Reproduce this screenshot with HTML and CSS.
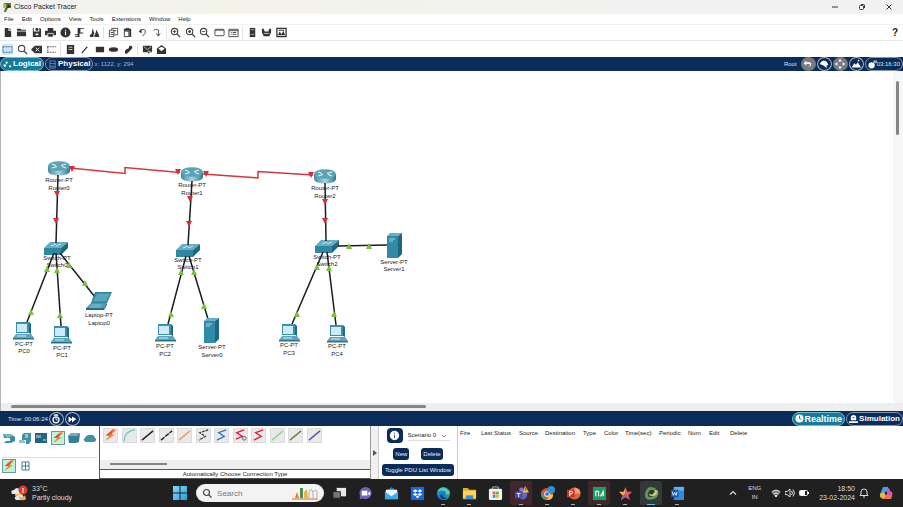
FILE: index.html
```html
<!DOCTYPE html>
<html lang="en">
<head>
<meta charset="utf-8">
<title>Cisco Packet Tracer</title>
<link rel="stylesheet" href="styles.css">
</head>
<body>
<svg class="defs" aria-hidden="true">
  <defs>
    <linearGradient id="steel" x1="0" x2="1"><stop offset="0" stop-color="#3f8ba3"/><stop offset=".5" stop-color="#a9d3de"/><stop offset="1" stop-color="#2f7890"/></linearGradient>
    <linearGradient id="edge" x1="0" y1="0" x2="1" y2="1"><stop offset="0" stop-color="#2fa9e8"/><stop offset=".55" stop-color="#1773c8"/><stop offset="1" stop-color="#3fc88a"/></linearGradient>
    <linearGradient id="win" x1="0" y1="0" x2="1" y2="1"><stop offset="0" stop-color="#7fdcf8"/><stop offset="1" stop-color="#2a9fe0"/></linearGradient>
    <symbol id="router" viewBox="0 0 22 15"><path d="M0 5v5c0 6 22 6 22 0V5z" fill="url(#steel)"/><ellipse cx="11" cy="5" rx="11" ry="4.8" fill="#5aa3b8"/><path d="M4 3l4 1.500M18 7l-4-1.500M4 7l5-1.500M18 3l-5 1.500" stroke="#e6f4f7" stroke-width="1.200"/></symbol>
    <symbol id="switch" viewBox="0 0 24 13"><path d="M0 6h17v7H0z" fill="#2f87a3"/><path d="M0 6L6 0h18l-7 6z" fill="#66adc1"/><path d="M17 6l7-6v6l-7 7z" fill="#1f6882"/><path d="M7 4l5-2M12 4l5-2" stroke="#d2eaf0"/></symbol>
    <symbol id="pc" viewBox="0 0 21 19"><path d="M3 1h13v11H3z" fill="#3c90aa"/><path d="M16 1l2 2v10l-2-1z" fill="#226a82"/><path d="M4 3h10v8H4z" fill="#cdeaf5"/><path d="M3 13h15l3 4H0z" fill="#5ba6bb"/><path d="M0 17h21v1.500H0z" fill="#28748d"/><path d="M4 15h9" stroke="#d5ecf1"/></symbol>
    <symbol id="laptop" viewBox="0 0 26 18"><path d="M9 0h17l-5 11H5z" fill="#2e849f"/><path d="M11 1.500h13l-4 8H7z" fill="#5aa6bb"/><path d="M5 11h16l-3 5H0z" fill="#4c9bb2"/><path d="M0 16h18v2H0zM18 16l3-5v2l-3 5z" fill="#226c86"/><path d="M5 13h11M4 15h11" stroke="#a6d0db" stroke-width=".7"/></symbol>
    <symbol id="server" viewBox="0 0 15 25"><path d="M0 3h11v22H0z" fill="#2f8ba7"/><path d="M0 3l3-3h12l-4 3z" fill="#68b0c4"/><path d="M11 3l4-3v21l-4 4z" fill="#1e6780"/><path d="M2 6h6M2 8h4" stroke="#a6d6e3"/></symbol>
    <symbol id="down" viewBox="0 0 6 6"><path d="M0 0h6L3 6z" fill="#d42f38"/></symbol>
    <symbol id="up" viewBox="0 0 6 6"><path d="M3 0l3 6H0z" fill="#74c23c"/></symbol>
    <symbol id="bolt" viewBox="0 0 14 14"><path d="M10 0L2 7l4 0-5 6 11-7H8l5-5z" fill="#f58b22"/><path d="M10 0L2 7l4 0 2-2z" fill="#e3503a"/></symbol>
    <symbol id="zoomer" viewBox="0 0 12 12"><circle cx="5" cy="5" r="3.500" fill="none" stroke="#444" stroke-width="1.200"/><path d="M7.500 7.500L11 11" stroke="#444" stroke-width="1.500"/></symbol>
  </defs>
</svg>

<header class="titlebar">
  <svg class="logo" viewBox="0 0 9 11"><path d="M1 1h7v5H5L3 10H1l1-4z" fill="#5c7a32"/><path d="M0 2h3v4H0z" fill="#b2c248"/><path d="M5 2l3 3-4 1z" fill="#223522"/></svg>
  <span class="apptitle">Cisco Packet Tracer</span>
  <div class="winbtns">
    <button aria-label="Minimize"><svg viewBox="0 0 8 8"><path d="M1 4h6" stroke="#333"/></svg></button>
    <button aria-label="Restore"><svg viewBox="0 0 8 8"><rect x="1.500" y="2.500" width="4" height="4" rx="1" fill="none" stroke="#333"/><path d="M3 1.500h2.500q1 0 1 1V5" fill="none" stroke="#333"/></svg></button>
    <button aria-label="Close"><svg viewBox="0 0 8 8"><path d="M1.500 1.500l5 5M6.500 1.500l-5 5" stroke="#333"/></svg></button>
  </div>
</header>

<nav class="menu">
  <a href="#">File</a><a href="#">Edit</a><a href="#">Options</a><a href="#">View</a><a href="#">Tools</a><a href="#">Extensions</a><a href="#">Window</a><a href="#">Help</a>
</nav>

<div class="toolbar">
  <div class="tools main">
    <button aria-label="New"><svg viewBox="0 0 12 12"><path d="M3 1h4v3h3v7H3z"/><path d="M8 1l2 2H8z"/></svg></button>
    <button aria-label="Open"><svg viewBox="0 0 12 12"><path d="M1 2h4l1 1h5v1H1zM1 5h10v5H1z"/></svg></button>
    <button aria-label="Save"><svg viewBox="0 0 12 12"><path fill-rule="evenodd" d="M2 1h1v4h6V1l2 1v9H2zM5 1h3v3H5zM5 7v2h3V7z"/></svg></button>
    <button aria-label="Print"><svg viewBox="0 0 12 12"><path d="M3 1h6v3H3zM0 4h12v5H0z"/><path d="M3 7h6v4H3z" stroke="#fff" stroke-width=".8"/></svg></button>
    <button aria-label="Activity"><svg viewBox="0 0 12 12"><circle cx="6" cy="6" r="5.500"/><path d="M6 3v1M6 5v4" stroke="#fff" stroke-width="1.200"/></svg></button>
    <button aria-label="Wizard"><svg viewBox="0 0 12 12"><path d="M4 1h7v1H7v4h3v1H6v4H1v-1h3zM1 8h3v1H1z"/></svg></button>
    <button aria-label="User"><svg viewBox="0 0 12 12"><path d="M4 1l2 7H5v3H1V9l2-2zM8 3l3 6v2H6V9l1-2z"/></svg></button>
    <i class="sep"></i>
    <button aria-label="Copy"><svg viewBox="0 0 12 12"><path d="M1.500 3.500h5v7h-5zM4 3V1.500h6.500v7H7M3 6h3M3 8h3M6 4h3" fill="none" stroke="#444"/></svg></button>
    <button aria-label="Paste"><svg viewBox="0 0 12 12"><path d="M2 2h8v9H8V4H2z"/><path d="M2.500 4.500h5v6h-5zM4 1.500h4" fill="none" stroke="#333"/></svg></button>
    <button aria-label="Undo"><svg viewBox="0 0 12 12"><path d="M3 4q5-3 6 0T6 10" fill="none" stroke="#444"/><path d="M5 2v5L2 5z"/></svg></button>
    <button aria-label="Redo"><svg viewBox="0 0 12 12"><path d="M9 4Q4 1 3 4" fill="none" stroke="#444"/><path d="M8 4v5M6 7l2 3 2-3" fill="none" stroke="#444"/></svg></button>
    <i class="sep"></i>
    <button aria-label="Zoom in"><svg viewBox="0 0 12 12"><use href="#zoomer"/><path d="M3 5h4M5 3v4" stroke="#444"/></svg></button>
    <button aria-label="Zoom reset"><svg viewBox="0 0 12 12"><use href="#zoomer"/><circle cx="5" cy="5" r="1.500"/></svg></button>
    <button aria-label="Zoom out"><svg viewBox="0 0 12 12"><use href="#zoomer"/><path d="M3 5h4" stroke="#444"/></svg></button>
    <button aria-label="Window"><svg viewBox="0 0 12 12"><rect x="1" y="2.500" width="10" height="7" rx="1" fill="none" stroke="#444"/><path d="M1 3.500h10" stroke="#444"/></svg></button>
    <button aria-label="Dialog"><svg viewBox="0 0 12 12"><path d="M1 2.500h10v8H1zM1 4h10M3 6h1M5 6h4M3 8h1M5 8h4" fill="none" stroke="#444"/></svg></button>
    <i class="sep"></i>
    <button aria-label="Device"><svg viewBox="0 0 12 12"><path d="M3 1h6v10H3z"/><path d="M4 3h4M4 8h4" stroke="#aaa"/></svg></button>
    <button aria-label="Cluster"><svg viewBox="0 0 12 12"><path d="M1 2h2l1 3h4l1-3h2v4l-2 4H3L1 6z"/><path d="M3 7h6" stroke="#ccc"/></svg></button>
    <button aria-label="Image"><svg viewBox="0 0 12 12"><path d="M1 1.500h10v9H1z" fill="none" stroke="#333" stroke-width="1.400"/><path d="M2 9l2-4 2 3 2-4 2 5zM3 3h6v1H3z"/></svg></button>
  </div>
  <button class="help" aria-label="Help">?</button>
</div>

<div class="toolbar second">
  <div class="tools draw">
    <button class="picked" aria-label="Select"><svg viewBox="0 0 12 12"><path d="M1 3h10v6H1z" fill="none" stroke="#27608f" stroke-dasharray="2 1"/></svg></button>
    <button aria-label="Inspect"><svg viewBox="0 0 12 12"><use href="#zoomer"/></svg></button>
    <button aria-label="Delete"><svg viewBox="0 0 12 12"><path d="M0 6l4-4h8v8H4z"/><path d="M5 4l4 4M9 4L5 8" stroke="#fff"/></svg></button>
    <button aria-label="Resize"><svg viewBox="0 0 12 12"><path d="M1 3h10M1 9h10M2 3v6" fill="none" stroke="#444" stroke-dasharray="2 1"/></svg></button>
    <i class="sep"></i>
    <button aria-label="Note"><svg viewBox="0 0 12 12"><path d="M2 1h8v10H2z"/><path d="M4 3.500h4M4 6h4" stroke="#ddd"/></svg></button>
    <button aria-label="Line"><svg viewBox="0 0 12 12"><path d="M3 10l6-7" stroke="#333" stroke-width="1.300"/></svg></button>
    <button aria-label="Rectangle"><svg viewBox="0 0 12 12"><path d="M2 3h9v6H2z"/></svg></button>
    <button aria-label="Ellipse"><svg viewBox="0 0 12 12"><ellipse cx="6" cy="6" rx="5" ry="2.500"/></svg></button>
    <button aria-label="Freeform"><svg viewBox="0 0 12 12"><path d="M7 2q4-1 3 3L6 9q-4 4-4-1 1-3 4-3z"/></svg></button>
    <i class="sep"></i>
    <button aria-label="Simple PDU"><svg viewBox="0 0 12 12"><path d="M1 2h10v7H8v2L6 9H1z"/><path d="M2 3l4 3 4-3M6 8h4" fill="none" stroke="#ddd" stroke-width=".8"/></svg></button>
    <button aria-label="Complex PDU"><svg viewBox="0 0 12 12"><path d="M1 5l5-4 5 4v6H1z"/><path d="M2.500 5L6 3l3.500 2L6 8z" fill="#fff"/></svg></button>
  </div>
</div>

<div class="bluebar">
  <button class="mode on"><svg viewBox="0 0 10 10"><circle cx="4" cy="3" r="1.200"/><circle cx="2" cy="6" r="1.400"/><circle cx="8" cy="7" r="1.200"/></svg>Logical</button>
  <button class="mode"><svg viewBox="0 0 10 10"><path d="M2 1h6v8H2zM2 4h6M2 7h6" fill="none" stroke="#7388aa"/></svg>Physical</button>
  <span class="coords">x: 1122, y: 294</span>
  <div class="right">
    <span class="root">Root</span>
    <button class="round gray" aria-label="Back"><svg viewBox="0 0 14 14"><path d="M5 3L2 6l3 3V7h4v4q4-6-1-6H5z"/></svg></button>
    <button class="round" aria-label="New cluster"><svg viewBox="0 0 14 14"><path d="M2 7l2-3 3-1 3 1 2 4-2 1v3L7 9z"/></svg></button>
    <button class="round gray" aria-label="Move"><svg viewBox="0 0 14 14"><path d="M7 1l2 3H5zM7 13l2-3H5zM1 7l3-2v4zM13 7l-3-2v4z"/></svg></button>
    <button class="round" aria-label="Background"><svg viewBox="0 0 14 14"><path d="M2 11l3-5 2 2 2-3 4 6z"/><circle cx="10" cy="3" r="1"/></svg></button>
    <button class="clock"><svg viewBox="0 0 10 10"><circle cx="4" cy="6.500" r="3.500"/><path d="M6 1h4v3H6z" opacity=".6"/></svg>03:16:30</button>
  </div>
</div>

<main class="workspace">
  <div class="view">
    <svg class="topology" viewBox="0 71 890 332">
      <use href="#router" x="48" y="161" width="22" height="15"/>
      <use href="#router" x="181" y="167" width="22" height="15"/>
      <use href="#router" x="314" y="169" width="22" height="15"/>
      <use href="#switch" x="44" y="242" width="24" height="13"/>
      <use href="#switch" x="176" y="244" width="24" height="13"/>
      <use href="#switch" x="315" y="240" width="24" height="13"/>
      <g class="labels">
        <text x="59" y="182">Router-PT</text><text x="59" y="190">Router0</text>
        <text x="192" y="187">Router-PT</text><text x="192" y="195">Router1</text>
        <text x="325" y="190">Router-PT</text><text x="325" y="198">Router2</text>
        <text x="57" y="260">Switch-PT</text><text x="57" y="267">Switch0</text>
        <text x="188" y="262">Switch-PT</text><text x="188" y="269">Switch1</text>
        <text x="327" y="259">Switch-PT</text><text x="327" y="266">Switch2</text>
        <text x="99" y="317">Laptop-PT</text><text x="99" y="325">Laptop0</text>
        <text x="24" y="346">PC-PT</text><text x="24" y="353">PC0</text>
        <text x="62" y="350">PC-PT</text><text x="62" y="357">PC1</text>
        <text x="165" y="348">PC-PT</text><text x="165" y="356">PC2</text>
        <text x="212" y="349">Server-PT</text><text x="212" y="357">Server0</text>
        <text x="289" y="347">PC-PT</text><text x="289" y="355">PC3</text>
        <text x="337" y="348">PC-PT</text><text x="337" y="356">PC4</text>
        <text x="394" y="264">Server-PT</text><text x="394" y="271">Server1</text>
      </g>
      <g class="serial">
        <path d="M70 168l55 5.500v-6l55 5"/>
        <path d="M203 174l55 4v-6.500l55 3.500"/>
      </g>
      <g class="copper">
        <path d="M58 175L56 243M192 181L188 245M325 183L326 241"/>
        <path d="M54 253L27 322M56 253L61 326M60 253L95 297"/>
        <path d="M186 256L168 324M189 256L208 319"/>
        <path d="M323 252L292 324M327 252L336 325M338 246L387 245"/>
      </g>
      <use href="#laptop" x="86" y="292" width="26" height="18"/>
      <use href="#pc" x="13" y="321" width="21" height="19"/>
      <use href="#pc" x="51" y="325" width="21" height="19"/>
      <use href="#pc" x="155" y="323" width="21" height="19"/>
      <use href="#pc" x="279" y="323" width="21" height="19"/>
      <use href="#pc" x="327" y="324" width="21" height="19"/>
      <use href="#server" x="204" y="318" width="15" height="25"/>
      <use href="#server" x="387" y="233" width="15" height="25"/>
      <g>
        <use href="#down" x="69" y="166" width="6" height="6"/><use href="#down" x="175" y="169" width="6" height="6"/>
        <use href="#down" x="203" y="171" width="6" height="6"/><use href="#down" x="308" y="172" width="6" height="6"/>
        <use href="#down" x="54" y="191" width="6" height="6"/><use href="#down" x="53" y="218" width="6" height="6"/>
        <use href="#down" x="187" y="196" width="6" height="6"/><use href="#down" x="186" y="221" width="6" height="6"/>
        <use href="#down" x="322" y="199" width="6" height="6"/><use href="#down" x="322" y="218" width="6" height="6"/>
      </g>
      <g>
        <use href="#up" x="44" y="266" width="6" height="6"/><use href="#up" x="54" y="267" width="6" height="6"/><use href="#up" x="66" y="262" width="6" height="6"/>
        <use href="#up" x="82" y="280" width="6" height="6"/><use href="#up" x="28" y="309" width="6" height="6"/><use href="#up" x="57" y="312" width="6" height="6"/>
        <use href="#up" x="178" y="269" width="6" height="6"/><use href="#up" x="191" y="269" width="6" height="6"/><use href="#up" x="168" y="311" width="6" height="6"/><use href="#up" x="201" y="303" width="6" height="6"/>
        <use href="#up" x="314" y="264" width="6" height="6"/><use href="#up" x="326" y="265" width="6" height="6"/><use href="#up" x="294" y="311" width="6" height="6"/><use href="#up" x="331" y="311" width="6" height="6"/>
        <use href="#up" x="346" y="243" width="6" height="6"/><use href="#up" x="366" y="243" width="6" height="6"/>
      </g>
    </svg>
    <div class="vscroll"><i></i></div>
  </div>
  <div class="hscroll"><i></i></div>
</main>

<div class="bluebar lower">
  <span class="time">Time: 00:06:24</span>
  <button class="round" aria-label="Power cycle"><svg viewBox="0 0 14 14"><circle cx="7" cy="8" r="3.500" fill="none" stroke="#fff" stroke-width="1.500"/><path d="M5 2h4v1H5zM7 5v3h2" fill="none" stroke="#fff"/></svg></button>
  <button class="round" aria-label="Fast forward"><svg viewBox="0 0 14 14"><path d="M3 4l4 3V4l5 3-5 4V8l-4 3z"/></svg></button>
  <div class="right">
    <button class="mode on large"><svg viewBox="0 0 10 10"><circle cx="5" cy="5" r="4.500"/><path d="M5 2v3l2 1" stroke="#167a99" fill="none"/></svg>Realtime</button>
    <button class="mode"><svg viewBox="0 0 10 10"><path d="M2 7V4q0-3 3-3t3 3v3zM0 8h10v2H0z"/><path d="M4 4h2" stroke="#0b2c58"/></svg>Simulation</button>
  </div>
</div>

<section class="dock">
  <div class="devices">
    <div class="cats">
      <button aria-label="Network devices"><svg viewBox="0 0 14 14"><path d="M1 3h8l4 3v4L9 12H2l2-2h4V7H2z" fill="#3c8ea6"/><path d="M1 3h8l2 2-6 2z" fill="#78b5c5"/></svg></button>
      <button aria-label="End devices"><svg viewBox="0 0 14 14"><path d="M6 2h7v8l-2 3H8V9H4V4z" fill="#438fa7"/><path d="M7 3h3v4H7zM1 9h5l2 3H1z" fill="#8fc3d1"/></svg></button>
      <button aria-label="Components"><svg viewBox="0 0 14 14"><path d="M1 2h12v10H1z" fill="#27637d"/><path d="M2 4h5v3H2zM9 8h3v2H9z" fill="#6ba6ba"/></svg></button>
      <button class="chosen" aria-label="Connections"><svg viewBox="0 0 14 14"><use href="#bolt"/></svg></button>
      <button aria-label="Miscellaneous"><svg viewBox="0 0 14 14"><path d="M1 5l3-3h9l-1 9-3 1H2z" fill="#377f96"/><path d="M1 5l3-3h9l-3 3z" fill="#76aebe"/></svg></button>
      <button aria-label="Multiuser"><svg viewBox="0 0 14 14"><path d="M3 11q-4-2-1-4 1-3 4-3 5-1 6 3 3 2-1 4z" fill="#458fa6"/></svg></button>
    </div>
    <div class="cats sub">
      <button class="chosen" aria-label="Connections"><svg viewBox="0 0 14 14"><use href="#bolt"/></svg></button>
      <button aria-label="Structured cabling"><svg viewBox="0 0 14 14"><path d="M4 3h7v8H4zM7.500 3v8M4 7h7" fill="none" stroke="#3d8097"/></svg></button>
    </div>
  </div>
  <div class="cables">
    <div class="types">
      <button aria-label="Automatic"><svg viewBox="0 0 14 14"><use href="#bolt"/></svg></button>
      <button aria-label="Console"><svg viewBox="0 0 14 14"><path d="M1 13Q2 2 13 1" fill="none" stroke="#6cc5cf" stroke-width="1.500"/></svg></button>
      <button aria-label="Straight-through"><svg viewBox="0 0 14 14"><path d="M1 12L13 2" stroke="#222" stroke-width="1.500"/></svg></button>
      <button aria-label="Cross-over"><svg viewBox="0 0 14 14"><path d="M1 12L13 2" stroke="#222" stroke-width="1.500" stroke-dasharray="5 1"/></svg></button>
      <button aria-label="Fiber"><svg viewBox="0 0 14 14"><path d="M1 12L13 2" stroke="#e3a451" stroke-width="1.500"/></svg></button>
      <button aria-label="Phone"><svg viewBox="0 0 14 14"><path d="M12 1L3 4l6 4-7 4" fill="none" stroke="#333" stroke-width="1.300" stroke-dasharray="3 1"/></svg></button>
      <button aria-label="Coaxial"><svg viewBox="0 0 14 14"><path d="M12 1L4 4l6 4-8 4" fill="none" stroke="#3279bd" stroke-width="1.500"/></svg></button>
      <button aria-label="Serial DCE"><svg viewBox="0 0 14 14"><path d="M11 1L3 4l6 4-7 3" fill="none" stroke="#d6232f" stroke-width="1.500"/><circle cx="11" cy="10" r="2" fill="#ddd" stroke="#666"/></svg></button>
      <button aria-label="Serial DTE"><svg viewBox="0 0 14 14"><path d="M12 1L4 4l6 4-8 4" fill="none" stroke="#d6232f" stroke-width="1.500"/></svg></button>
      <button aria-label="Octal"><svg viewBox="0 0 14 14"><path d="M1 12L13 2" stroke="#87d890" stroke-width="1.500"/></svg></button>
      <button aria-label="IoT cable"><svg viewBox="0 0 14 14"><path d="M1 12L13 2" stroke="#7d7847" stroke-width="1.500"/></svg></button>
      <button aria-label="USB"><svg viewBox="0 0 14 14"><path d="M1 12L13 2" stroke="#5f55ae" stroke-width="1.500"/></svg></button>
    </div>
    <div class="cscroll"><i></i></div>
    <div class="caption">Automatically Choose Connection Type</div>
  </div>
  <button class="grip" aria-label="Collapse"><svg viewBox="0 0 4 6"><path d="M0 0l4 3-4 3z" fill="#555"/></svg></button>
  <div class="scenario">
    <div class="pick">
      <button class="info" aria-label="Scenario description"><svg viewBox="0 0 14 14"><circle cx="7" cy="7" r="5" fill="#fff"/><path d="M7 4v1M7 6v4" stroke="#2a4f7d"/></svg></button>
      <select aria-label="Scenario"><option>Scenario 0</option></select>
      <svg class="chev" viewBox="0 0 6 4"><path d="M1 1l2 2 2-2" fill="none" stroke="#666" stroke-width=".8"/></svg>
    </div>
    <div class="pair"><button class="navy">New</button><button class="navy">Delete</button></div>
    <button class="navy toggle">Toggle PDU List Window</button>
  </div>
  <div class="pdus">
    <table>
      <colgroup><col class="c-s"><col class="c-l"><col class="c-m"><col class="c-l"><col class="c-s"><col class="c-s"><col class="c-t"><col class="c-p"><col class="c-s"><col class="c-s"><col></colgroup>
      <thead><tr><th>Fire</th><th>Last Status</th><th>Source</th><th>Destination</th><th>Type</th><th>Color</th><th>Time(sec)</th><th>Periodic</th><th>Num</th><th>Edit</th><th>Delete</th></tr></thead>
    </table>
  </div>
</section>

<footer class="taskbar">
  <button class="weather">
    <svg viewBox="0 0 18 18"><circle cx="9" cy="10" r="4" fill="#f4b63f"/><path d="M2 10q-2-4 2-4 3-4 6 0v4zM6 16q-3-3 1-4 4-3 7 1 2 3-1 3z" fill="#dbe8f5"/><path d="M9 12q4 3 6-1l1 4q-2 2-6 1z" fill="#f7a94f"/><circle cx="13" cy="6" r="4.500" fill="#e0392f"/><path d="M12 5l1-1v5" fill="none" stroke="#fff"/></svg>
    <span>33°C<br>Partly cloudy</span>
  </button>
  <button class="start" aria-label="Start"><svg viewBox="0 0 14 14"><path d="M0 0h6.500v6.500H0zM7.500 0H14v6.500H7.500zM0 7.500h6.500V14H0zM7.500 7.500H14V14H7.500z" fill="url(#win)"/></svg></button>
  <label class="search">
    <svg viewBox="0 0 10 10"><circle cx="4.500" cy="4.500" r="3" fill="none" stroke="#444" stroke-width="1.200"/><path d="M7 7l2.500 2.500" stroke="#444" stroke-width="1.200"/></svg>
    <input type="text" placeholder="Search" aria-label="Search">
    <svg class="deco" viewBox="0 0 28 14"><path d="M0 12h26v2H0z" fill="#e2b08c"/><path d="M3 12l2-6 2 6z" fill="#e8793c"/><path d="M8 2h3v10H8z" fill="#4f8b52"/><path d="M12 6l3-3 1 9h-4z" fill="#e9b73d"/><path d="M17 12V6q2-5 4 0v6M21 6q3-4 4 0v6" fill="none" stroke="#a8b694"/></svg>
  </label>
  <div class="apps">
    <button aria-label="Task view"><svg viewBox="0 0 16 16"><path d="M5 2h10v9H5z" fill="#e8e8e8"/><path d="M1 6h8v7H1z" fill="#777" stroke="#222"/></svg></button>
    <button aria-label="Chat"><svg viewBox="0 0 16 16"><circle cx="8" cy="7.500" r="6.500" fill="#7063ba"/><path d="M2 10l0 4 4-1z" fill="#7063ba"/><path d="M4 5h6v5H4zM11 7l2-1v4l-2-1z" fill="#fff"/></svg></button>
    <button aria-label="Mail"><svg viewBox="0 0 16 16"><path d="M1 6l7-5 7 5v8H1z" fill="#1c78c8"/><path d="M2 4h12v5l-6 3-6-3z" fill="#eef6fb"/><path d="M1 6l7 5 7-5v8H1z" fill="#39acea"/></svg></button>
    <button aria-label="Dropbox"><svg viewBox="0 0 16 16"><path d="M1 1h14v14H1z" fill="#1669e5"/><path d="M5.500 3.500L8 5.200 5.500 7 3 5.200zM10.500 3.500L13 5.200 10.500 7 8 5.200zM5.500 7.200L8 9l-2.500 1.700L3 9zM10.500 7.200L13 9l-2.500 1.700L8 9zM8 10l2 1.500L8 13l-2-1.500z" fill="#fff"/></svg></button>
    <button class="run" aria-label="Edge"><svg viewBox="0 0 16 16"><circle cx="8" cy="8" r="7" fill="url(#edge)"/><path d="M2 5q5-7 12 0 2 5-4 4 1-4-3-4Q4 4 2 6z" fill="#55d0a6"/><path d="M6 8q0 5 7 4-6 5-9-1z" fill="#123e83"/></svg></button>
    <button class="run" aria-label="Explorer"><svg viewBox="0 0 16 16"><path d="M1 2h5l2 2h7v10H1z" fill="#e9a92b"/><path d="M1 5h14v8H1z" fill="#fbd35d"/><path d="M4 10h8v4H4z" fill="#3c8ed1"/></svg></button>
    <button aria-label="Store"><svg viewBox="0 0 16 16"><path d="M5 4V1h6v3" fill="none" stroke="#bbb"/><rect x="1" y="3" width="14" height="12" rx="1.500" fill="#f1f1f1"/><path d="M5 6h3v3H5z" fill="#e9603c"/><path d="M8.500 6h3v3h-3z" fill="#6caf3a"/><path d="M5 9.500h3v3H5z" fill="#3b92d8"/><path d="M8.500 9.500h3v3h-3z" fill="#e4b338"/></svg></button>
    <button class="run warm" aria-label="Teams"><svg viewBox="0 0 16 16"><circle cx="8" cy="4" r="2.500" fill="#737bd9"/><path d="M4 6h10v5q-4 6-9 1z" fill="#6268c8"/><path d="M1 6h8v7H1z" fill="#464ab2"/><path d="M3 8h4M5 8v4" stroke="#fff"/><path d="M12 0l4 7H9z" fill="#f5b548"/><path d="M12.500 2v3" stroke="#543"/></svg></button>
    <button class="run" aria-label="Chrome"><svg viewBox="0 0 16 16"><circle cx="7.500" cy="8.500" r="6.500" fill="#e84a3b"/><path d="M1.500 6l4 6 2 3Q1 15 1 8z" fill="#3aa757"/><path d="M7 15l4-6h3q0 6-7 6z" fill="#f8c83a"/><circle cx="7.500" cy="8.500" r="3" fill="#fff"/><circle cx="7.500" cy="8.500" r="2.200" fill="#397ce0"/><circle cx="12" cy="4" r="4" fill="#2793d1"/></svg></button>
    <button class="run" aria-label="PowerPoint"><svg viewBox="0 0 16 16"><circle cx="9" cy="8" r="6.500" fill="#e0623f"/><path d="M9 1.500A6.500 6.500 0 0 1 15.500 8H9z" fill="#f59a78"/><path d="M1 4h8v8H1z" fill="#bd3a20"/><path d="M4 11V5.500h2q2 1.500 0 3H4" fill="none" stroke="#fff"/></svg></button>
    <button class="run warm" aria-label="Notes"><svg viewBox="0 0 16 16"><path d="M1 1h14v14H1z" fill="#18a061"/><path d="M4 11V6q2-1 3 0v5M9 11l3-5v5" fill="none" stroke="#fff" stroke-width="1.300"/></svg></button>
    <button class="run" aria-label="Favourites"><svg viewBox="0 0 16 16"><path d="M8 1l2 5h5l-4 4 2 5-5-3z" fill="#e65b69"/><path d="M8 1L6 6H1l4 4-2 5 5-3z" fill="#f5ae42"/><path d="M5 10l-2 5 5-3V8z" fill="#8b57b5"/></svg></button>
    <button class="run active" aria-label="Packet Tracer"><svg viewBox="0 0 16 16"><path d="M12 4Q5 0 3 7t5 6q6-1 6-6" fill="none" stroke="#639757" stroke-width="3"/><path d="M5 8q5 3 7-4l3 1q-2 8-9 5z" fill="#bed07c"/><circle cx="8" cy="7" r="2" fill="#243c2e"/></svg></button>
    <button class="run" aria-label="Word"><svg viewBox="0 0 16 16"><path d="M4 1h11v14H4z" fill="#318bdb"/><path d="M4 1h11v4H4z" fill="#5ab2f0"/><path d="M1 4h8v8H1z" fill="#1756ad"/><path d="M2.500 6l1 4L5 7l1.500 3 1-4" fill="none" stroke="#fff" stroke-width=".9"/></svg></button>
  </div>
  <div class="tray">
    <button aria-label="Hidden icons"><svg viewBox="0 0 10 10"><path d="M2 6.500l3-3 3 3" fill="none" stroke="#ddd" stroke-width="1.200"/></svg></button>
    <span class="lang">ENG<br>IN</span>
    <span class="status">
    <svg viewBox="0 0 10 10"><path d="M0 4q5-5 10 0L5 9.500z" fill="#777"/><path d="M1 4q4-3.500 8 0M2.500 6q2.500-2 5 0" fill="none" stroke="#ddd"/><circle cx="5" cy="8" r="1" fill="#fff"/></svg>
    <svg viewBox="0 0 10 10"><path d="M0 3.500h2L5 1v8L2 6.500H0zM6.500 3q2 2 0 4M8 1.500q3 3.500 0 7" fill="none" stroke="#ddd"/></svg>
    <svg viewBox="0 0 10 10"><rect x=".5" y="2.500" width="8" height="5" rx="1" fill="none" stroke="#eee"/><path d="M1 3h5v4H1zM9 4h1v2H9z" fill="#fff"/></svg>
    </span>
    <span class="date">18:50<br>23-02-2024</span>
    <button aria-label="Notifications"><svg viewBox="0 0 10 10"><path d="M1 7.500h8L8 6V4Q8 1 5 1T2 4v2zM4 9h2" fill="none" stroke="#ddd"/></svg></button>
    <button class="copilot" aria-label="Copilot"><svg viewBox="0 0 14 14"><path d="M4 1h5l1 4-4 1-2 6Q0 12 1 8z" fill="#36a7de"/><path d="M8 2q3 0 3 3l2 1q1 2 0 4l-1 3H6l2-6z" fill="#d557b3"/><path d="M1 8l4-2 2 4-2 3q-3 0-4-3z" fill="#f2b737"/><path d="M7 9h6l-1 4H5z" fill="#ef7252"/></svg></button>
  </div>
</footer>
</body>
</html>
```
FILE: styles.css
```css
* { box-sizing: border-box; }
body {
  margin: 0;
  height: 100vh;
  display: flex;
  flex-direction: column;
  overflow: hidden;
  background: #fff;
  color: #222;
  font-family: "Liberation Sans", Arial, sans-serif;
  font-size: 6px;
  line-height: 8px;
}
button, input, select {
  font: inherit;
  color: inherit;
  border: 0;
  background: none;
  padding: 0;
  margin: 0;
}
button { display: flex; align-items: center; justify-content: center; flex: none; }
svg { display: block; flex: none; }
a { color: inherit; text-decoration: none; }
.defs { position: absolute; width: 0; height: 0; }

.titlebar {
  display: flex;
  align-items: center;
  height: 14px;
  flex: none;
  padding: 0 10px 0 3px;
  gap: 2px;
  background: linear-gradient(90deg, #f1f2f0, #f3f3ea 25%, #f1f1f1 70%);
}
.logo { width: 9px; height: 11px; }
.apptitle { font-size: 7px; }
.winbtns { display: flex; margin-left: auto; gap: 19px; }
.winbtns svg { width: 8px; height: 8px; }

.menu { display: flex; align-items: center; gap: 8px; height: 10px; padding: 0 4px; flex: none; }

.toolbar {
  display: flex;
  align-items: center;
  justify-content: space-between;
  height: 17px;
  flex: none;
  padding: 0 5px 0 2px;
  border-top: 1px solid #f0f0f0;
  border-bottom: 1px solid #e8e8e8;
}
.toolbar.second { height: 16px; border: 0; }
.tools { display: flex; align-items: center; justify-content: space-between; }
.tools.main { width: 285px; }
.tools.draw { width: 165px; }
.tools svg { width: 11px; height: 11px; fill: #333; }
.tools .picked { background: #cfe6f8; }
.sep { width: 1px; height: 12px; background: #e4e4e4; }
.help { font-size: 10px; font-weight: bold; }

.bluebar {
  display: flex;
  align-items: center;
  height: 14px;
  flex: none;
  gap: 1px;
  background: #0b2c58;
  color: #dfe7f2;
}
.bluebar svg { fill: #fff; }
.bluebar.lower { height: 15px; padding-left: 8px; }
.right { display: flex; align-items: center; margin-left: auto; gap: 1px; }
.mode {
  height: 14px;
  padding: 0 2px;
  gap: 1px;
  border: 1px solid #8296b5;
  border-radius: 7px;
  color: #fff;
  font-size: 8px;
  font-weight: bold;
}
.mode svg { width: 9px; height: 9px; }
.mode.on { background: #167a99; border-color: #75bacd; }
.mode.large { font-size: 9px; }
.coords { color: #a9b8d0; }
.root { margin-right: 3px; }
.round {
  width: 15px;
  height: 14px;
  border: 1px solid #a5b3c8;
  border-radius: 50%;
}
.round svg { width: 12px; height: 12px; }
.round.gray { background: #777b80; border-color: #777b80; }
.clock {
  height: 14px;
  padding: 0 2px;
  border: 1px solid #8296b5;
  border-radius: 7px;
}
.clock svg { width: 9px; height: 10px; }
.time { font-size: 6px; }

.workspace { flex: 1; min-height: 0; display: flex; flex-direction: column; border-left: 1px solid #b5b5b5; }
.view { flex: 1; min-height: 0; display: flex; overflow: hidden; }
.topology { width: 890px; height: 332px; margin-left: -1px; }
.vscroll { margin-left: auto; width: 10px; padding: 10px 3px; background: #f6f6f6; }
.vscroll i { display: block; width: 3px; height: 54px; background: #858585; border-radius: 2px; }
.hscroll { height: 8px; padding: 2px 10px; background: #eee; }
.hscroll i { display: block; width: 47%; height: 3px; background: #858585; border-radius: 2px; }
.labels text { font-size: 6px; text-anchor: middle; fill: #222; }
.serial path { fill: none; stroke: #d6353c; stroke-width: 1.5; }
.copper path { fill: none; stroke: #1c1c1c; stroke-width: 1.5; }

.dock { display: flex; height: 53px; flex: none; }
.devices { width: 99px; padding: 4px 2px; }
.cats { display: flex; justify-content: space-between; height: 28px; align-items: flex-start; padding-top: 1px; border-bottom: 1px solid #ddd; }
.cats svg { width: 14px; height: 14px; }
.cats .chosen { background: #bdf3e3; border: 1px solid #6a9a9a; }
.cats .chosen svg { width: 12px; height: 12px; }
.cats.sub { border: 0; justify-content: flex-start; gap: 2px; height: 18px; }
.cables { width: 272px; display: flex; flex-direction: column; border-left: 1px solid #555; border-right: 1px solid #999; }
.types { display: flex; justify-content: space-between; padding: 2px 48px 0 3px; flex: 1; align-items: flex-start; }
.types button { width: 15px; height: 15px; background: #e9e9eb; border: 1px solid #dcdcde; }
.types svg { width: 13px; height: 13px; }
.cscroll { height: 9px; padding: 3px 10px; background: #eee; }
.cscroll i { display: block; width: 57px; height: 2px; background: #858585; }
.caption { height: 10px; border: 1px solid #555; border-width: 1px 0; text-align: center; }
.grip { width: 7px; background: #f0f0f0; }
.grip svg { width: 4px; height: 6px; }
.scenario { width: 79px; display: flex; flex-direction: column; align-items: center; justify-content: space-between; padding: 2px 0 3px; border-left: 1px solid #ccc; }
.pick { position: relative; display: flex; align-items: center; gap: 5px; }
.info { width: 16px; height: 15px; border-radius: 4px; background: #0b2c58; }
.info svg { width: 13px; height: 13px; }
.pick select { width: 42px; height: 11px; appearance: none; border-bottom: 1px solid #ddd; }
.chev { position: absolute; right: 3px; top: 6px; width: 6px; height: 4px; }
.pair { display: flex; gap: 12px; }
.navy { height: 12px; padding: 0 2px; border-radius: 3px; background: #0b2c58; color: #e9eff8; }
.pair .navy { min-width: 16px; }
.toggle { padding: 0 3px; }
.pdus { flex: 1; border-left: 1px solid #ccc; padding: 3px 2px; }
table { border-collapse: collapse; table-layout: fixed; width: 294px; }
th { padding: 0; font-weight: normal; text-align: left; white-space: nowrap; }
.c-s { width: 21px; }
.c-m { width: 26px; }
.c-l { width: 38px; }
.c-t { width: 34px; }
.c-p { width: 29px; }

.taskbar { display: flex; align-items: center; height: 28px; flex: none; padding: 0 10px; background: #202020; color: #ddd; }
.weather { gap: 4px; font-size: 7px; text-align: left; line-height: 9px; }
.weather svg { width: 18px; height: 18px; }
.start { margin-left: 101px; }
.start svg { width: 14px; height: 14px; }
.search { display: flex; align-items: center; width: 128px; height: 18px; margin-left: 9px; padding: 0 4px 0 6px; gap: 5px; border-radius: 9px; background: #f3f3f3; }
.search svg { width: 10px; height: 10px; }
.search input { flex: 1; min-width: 0; font-size: 8px; color: #333; outline: 0; }
.search input::placeholder { color: #777; }
.search .deco { width: 28px; height: 14px; }
.apps { display: flex; margin-left: 4px; gap: 4px; }
.apps button { position: relative; width: 22px; height: 24px; border-radius: 2px; }
.apps svg { width: 15px; height: 15px; }
.apps .warm { background: #41272c; }
.apps .active { background: #34383a; }
.apps .run::after { content: ""; position: absolute; bottom: 0; left: 9px; width: 4px; height: 1px; background: #aaa; }
.apps .active::after { left: 7px; width: 8px; background: #6fb6e5; }
.tray { display: flex; align-items: center; margin-left: auto; gap: 4px; }
.tray svg { width: 10px; height: 10px; }
.lang { margin-left: 6px; text-align: center; line-height: 9px; }
.status { display: flex; gap: 4px; margin: 0 6px; }
.date { font-size: 7px; text-align: right; line-height: 9px; }
.tray .copilot { margin-left: 6px; }
.tray .copilot svg { width: 14px; height: 14px; }
```
